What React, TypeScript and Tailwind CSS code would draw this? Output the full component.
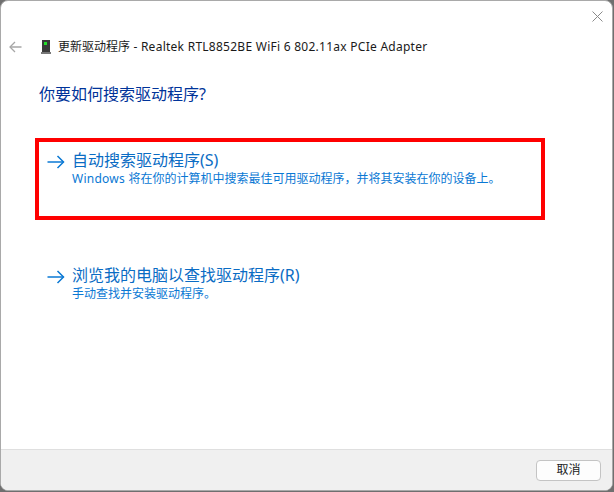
// App.tsx
// Windows 11 "update driver" wizard, first step.

const FONT = "font-['Segoe_UI','Noto_Sans','Noto_Sans_CJK_SC',sans-serif]";

function ArrowIcon() {
  return (
    <svg width="18" height="14" viewBox="0 0 18 14" fill="none" stroke="#0a78d4" strokeWidth="1.5">
      <path d="M0.5 7H16.5" />
      <path d="M10.5 1L16.5 7L10.5 13" />
    </svg>
  );
}

function NicIcon() {
  return (
    <svg width="10" height="14" viewBox="0 0 10 14">
      <rect x="1" y="0" width="8" height="12" fill="#3a3a3a" />
      <rect x="3" y="2" width="3" height="3" fill="#22e02a" />
      <rect x="0" y="12" width="10" height="2" fill="#777" />
    </svg>
  );
}

interface OptionProps {
  title: string;
  detail: React.ReactNode;
}

function Option({ title, detail }: OptionProps) {
  return (
    <div className="flex">
      <div className="w-[34px] pl-[9px] pt-[6px]">
        <ArrowIcon />
      </div>
      <div>
        <p className="text-[16px] leading-[22px] text-[#0a6cc4]">{title}</p>
        <p className="text-[12px] leading-[16px] text-[#0a78d4]">{detail}</p>
      </div>
    </div>
  );
}

export default function App() {
  return (
    <div className={`${FONT} h-[492px] w-[614px] bg-[#6f6f6f]`}>
      <div className="relative flex h-[491px] w-[613px] flex-col overflow-hidden rounded-[8px] border border-[#a9a9a9] bg-white">
        {/* Close */}
        <div className="absolute right-[5px] top-[5px] flex h-[20px] w-[20px] items-center justify-center">
          <svg width="11" height="11" viewBox="0 0 11 11" stroke="#8a8a8a" strokeWidth="1">
            <path d="M0.5 0.5L10.5 10.5M10.5 0.5L0.5 10.5" />
          </svg>
        </div>

        {/* Header row */}
        <div className="flex h-[30px] items-center pl-[8px] mt-[31px]">
          <svg width="13" height="12" viewBox="0 0 13 12" fill="none" stroke="#a6a6a6" strokeWidth="1.3">
            <path d="M12.5 6H1" />
            <path d="M6 1L1 6L6 11" />
          </svg>
          <span className="ml-[19px]">
            <NicIcon />
          </span>
          <span className="ml-[7px] text-[12px] text-[#1a1a1a]">
            更新驱动程序
            <span className="tracking-[0.26px]"> - Realtek RTL8852BE WiFi 6 802.11ax PCIe Adapter</span>
          </span>
        </div>

        <div className="flex-1 pl-[38px]">
          <h1 className="mt-[21px] text-[16px] leading-[22px] text-[#003399]">
            你要如何搜索驱动程序?
          </h1>
          <div className="mt-[44px] -ml-[1px]">
            <Option
              title="自动搜索驱动程序(S)"
              detail={
                <>
                  <span className="tracking-[0.25px]">Windows </span>
                  将在你的计算机中搜索最佳可用驱动程序，并将其安装在你的设备上。
                </>
              }
            />
          </div>
          <div className="mt-[77px] -ml-[1px]">
            <Option title="浏览我的电脑以查找驱动程序(R)" detail="手动查找并安装驱动程序。" />
          </div>
        </div>

        {/* Footer */}
        <div className="flex h-[41px] items-center justify-end border-t border-[#dfdfdf] bg-[#f0f0f0] pr-[11px]">
          <button className="h-[21px] w-[65px] rounded-[4px] border border-[#c4c4c4] bg-[#fdfdfd] text-[12px] leading-none text-[#1a1a1a]">
            取消
          </button>
        </div>

        {/* Red annotation drawn over the dialog */}
        <div className="absolute left-[34px] top-[137px] h-[82px] w-[510px] border-[4px] border-[#ff0000]" />
      </div>
    </div>
  );
}
